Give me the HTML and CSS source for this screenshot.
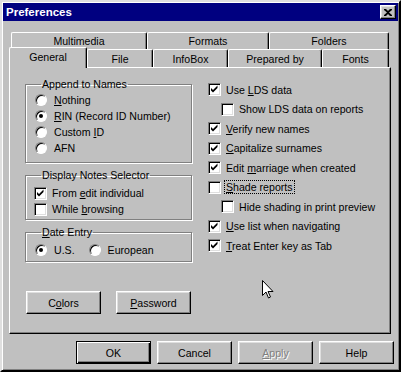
FILE: index.html
```html
<!DOCTYPE html>
<html lang="en">
<head>
    <meta charset="UTF-8">
    <title>Preferences</title>
    <link rel="stylesheet" href="styles.css">
</head>
<body>

<div class="window">
    <div class="titlebar">
        <span class="title">Preferences</span>
        <button class="close">
            <svg width="8" height="7" viewBox="0 0 8 7"><path d="M0 0h2l2 2 2-2h2v1L5 3.5 8 6v1H6L4 5 2 7H0V6l3-2.5L0 1z" fill="#000"/></svg>
        </button>
    </div>

    <div class="tabs">
        <div class="tab-row back">
            <div class="tab" style="width:136px">Multimedia</div>
            <div class="tab" style="width:122px">Formats</div>
            <div class="tab" style="width:120px">Folders</div>
        </div>
        <div class="tab-row front">
            <div class="tab active" style="width:78px">General</div>
            <div class="tab" style="width:66px">File</div>
            <div class="tab" style="width:75px">InfoBox</div>
            <div class="tab" style="width:94px">Prepared by</div>
            <div class="tab" style="width:67px">Fonts</div>
        </div>
        <div class="panel">
            <div class="col-left">
                <fieldset class="group append">
                    <legend>Append to Names</legend>
                    <div class="opt"><span class="radio"></span><span><u>N</u>othing</span></div>
                    <div class="opt"><span class="radio on"></span><span><u>R</u>IN (Record ID Number)</span></div>
                    <div class="opt"><span class="radio"></span><span>Custom <u>I</u>D</span></div>
                    <div class="opt"><span class="radio"></span><span>AFN</span></div>
                </fieldset>
                <fieldset class="group notes">
                    <legend>Display Notes Selector</legend>
                    <div class="opt"><span class="check on"></span><span>From <u>e</u>dit individual</span></div>
                    <div class="opt"><span class="check"></span><span>While <u>b</u>rowsing</span></div>
                </fieldset>
                <fieldset class="group dates">
                    <legend><u>D</u>ate Entry</legend>
                    <div class="opt">
                        <span class="radio on"></span><span class="us">U.S.</span>
                        <span class="radio"></span><span>European</span>
                    </div>
                </fieldset>
                <div class="small-buttons">
                    <button class="btn">C<u>o</u>lors</button>
                    <button class="btn"><u>P</u>assword</button>
                </div>
            </div>
            <div class="col-right">
                <div class="opt row"><span class="check on"></span><span>Use <u>L</u>DS data</span></div>
                <div class="opt row sub"><span class="check"></span><span>Show LDS data on reports</span></div>
                <div class="opt row"><span class="check on"></span><span><u>V</u>erify new names</span></div>
                <div class="opt row"><span class="check on"></span><span><u>C</u>apitalize surnames</span></div>
                <div class="opt row"><span class="check on"></span><span>Edit <u>m</u>arriage when created</span></div>
                <div class="opt row"><span class="check"></span><span class="focus"><u>S</u>hade reports</span></div>
                <div class="opt row sub"><span class="check"></span><span>Hide shading in print preview</span></div>
                <div class="opt row"><span class="check on"></span><span><u>U</u>se list when navigating</span></div>
                <div class="opt row"><span class="check on"></span><span><u>T</u>reat Enter key as Tab</span></div>
            </div>
        </div>
    </div>

    <div class="dialog-buttons">
        <button class="btn default">OK</button>
        <button class="btn">Cancel</button>
        <button class="btn disabled"><u>A</u>pply</button>
        <button class="btn">Help</button>
    </div>

    <svg class="cursor" width="12" height="19" viewBox="0 0 12 19">
        <path d="M0.5 0.5v15l3.5-3.5 2.5 6 2-1-2.5-5.5h5z" fill="#fff" stroke="#000"/>
    </svg>
</div>

</body>
</html>
```

FILE: styles.css
```css
body {
    margin: 0;
    background: #c0c0c0;
    font-family: 'Liberation Sans', Arial, sans-serif;
    font-size: 10.6px;
    color: #000;
}
.window {
    position: relative;
    width: 401px;
    height: 372px;
    box-sizing: border-box;
    padding: 1px;
    background: #c0c0c0;
    border: 2px solid;
    border-color: #dfdfdf #000 #000 #dfdfdf;
    box-shadow: inset 1px 1px #fff, inset -1px -1px #808080;
}
.titlebar {
    height: 18px;
    background: #000080;
    display: flex;
    align-items: center;
    justify-content: space-between;
    padding: 0 2px 0 3px;
}
.title {
    color: #fff;
    font-weight: bold;
    font-size: 11.5px;
}
.close {
    width: 16px;
    height: 14px;
    padding: 0;
    background: #c0c0c0;
    border: 1px solid;
    border-color: #fff #000 #000 #fff;
    box-shadow: inset -1px -1px #808080, inset 1px 1px #dfdfdf;
    display: flex;
    align-items: center;
    justify-content: center;
}
button {
    font-family: inherit;
    font-size: 10.6px;
    color: #000;
}

/* tabs */
.tabs {
    width: 382px;
    margin: 11px 0 0 6px;
}
.tab-row {
    display: flex;
    height: 17px;
}
.tab-row.back {
    padding: 0 2px;
}
.tab-row.front {
    height: 18px;
}
.tab {
    box-sizing: border-box;
    height: 100%;
    display: flex;
    align-items: center;
    justify-content: center;
    border-top: 1px solid #fff;
    border-left: 1px solid #fff;
    border-right: 1px solid #000;
    box-shadow: inset -1px 0 #808080;
    border-radius: 2px 2px 0 0;
    padding-top: 1px;
}
.back .tab {
    padding-top: 0;
}
.tab.active {
    position: relative;
    z-index: 1;
    height: 21px;
    margin-top: -2px;
    padding-bottom: 3px;
    background: #c0c0c0;
}
.panel {
    height: 267px;
    box-sizing: border-box;
    border: 1px solid;
    border-color: #fff #000 #000 #fff;
    box-shadow: inset -1px -1px #808080;
    display: flex;
    padding: 10px 0 0 15px;
}
.col-left {
    width: 167px;
}
.col-right {
    margin-left: 16px;
    padding-top: 2px;
}

/* group boxes */
.group {
    margin: 0;
    padding: 0 0 0 9px;
    border: 1px solid #808080;
    box-shadow: 1px 1px #fff, inset 1px 1px #fff;
}
.group legend {
    padding: 0 1px;
    margin-left: 6px;
    line-height: 13px;
}
.append {
    padding-bottom: 6px;
}
.append .opt:first-of-type {
    margin-top: 1px;
}
.notes {
    margin-top: 6px;
    padding-bottom: 2px;
}
.notes .opt:first-of-type {
    margin-top: 3px;
}
.dates {
    margin-top: 6px;
    padding-bottom: 3px;
}
.dates .opt {
    margin-top: 3px;
}

/* options */
.opt {
    display: flex;
    align-items: center;
    height: 16px;
    white-space: nowrap;
}
.opt.row {
    height: 19.5px;
}
.opt.sub {
    padding-left: 13px;
}
.radio {
    position: relative;
    width: 12px;
    height: 12px;
    box-sizing: border-box;
    border-radius: 50%;
    background: #fff;
    border: 1px solid;
    border-color: #808080 #fff #fff #808080;
    box-shadow: inset 1px 1px #000;
    margin-right: 7px;
    flex: none;
}
.radio.on::after {
    content: "";
    position: absolute;
    left: 3px;
    top: 3px;
    width: 4px;
    height: 4px;
    border-radius: 50%;
    background: #000;
}
.us {
    margin-right: 14px;
}
.check {
    width: 13px;
    height: 13px;
    box-sizing: border-box;
    background: #fff;
    border: 1px solid;
    border-color: #808080 #fff #fff #808080;
    box-shadow: inset 1px 1px #000, inset -1px -1px #dfdfdf;
    margin-right: 5px;
    flex: none;
}
.notes .check {
    margin-left: -1px;
}
.check.on {
    background: #fff url("data:image/svg+xml,%3Csvg xmlns='http://www.w3.org/2000/svg' width='11' height='11'%3E%3Cpath d='M2 4l2 2 4.5-4.5v2.5L4 8.5 2 6.5z' fill='%23000'/%3E%3C/svg%3E") no-repeat 0 0;
}
.focus {
    outline: 1px dotted #000;
    padding: 0 1px;
    margin-left: -1px;
}

/* buttons */
.btn {
    width: 75px;
    height: 23px;
    padding: 0;
    background: #c0c0c0;
    border: 1px solid;
    border-color: #fff #000 #000 #fff;
    box-shadow: inset -1px -1px #808080, inset 1px 1px #dfdfdf;
}
.btn.default {
    border-color: #000;
    box-shadow: inset 1px 1px #fff, inset -1px -1px #000, inset -2px -2px #808080;
}
.btn.disabled {
    color: #808080;
    text-shadow: 1px 1px #fff;
}
.small-buttons {
    display: flex;
    gap: 15px;
    margin: 29px 0 0 1px;
}
.dialog-buttons {
    display: flex;
    justify-content: flex-end;
    gap: 6px;
    margin-top: 7px;
    padding-right: 4px;
}
.cursor {
    position: absolute;
    left: 260px;
    top: 278px;
}
```
